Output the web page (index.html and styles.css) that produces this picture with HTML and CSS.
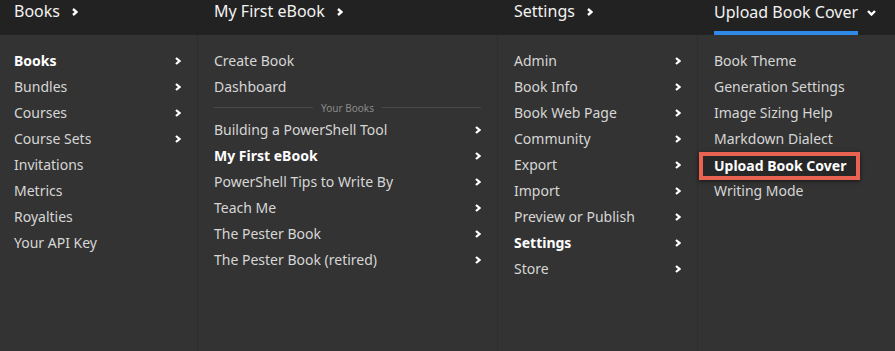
FILE: index.html
```html
<!DOCTYPE html>
<html>
<head>
    <link rel="stylesheet" href="styles.css">
</head>
<body>
    <div class="nav">
        <div class="crumbs">
            <div class="crumb col-1">Books <svg class="chev" viewBox="0 0 6 8"><polyline points="1,1 4.5,4 1,7"/></svg></div>
            <div class="crumb col-2">My First eBook <svg class="chev" viewBox="0 0 6 8"><polyline points="1,1 4.5,4 1,7"/></svg></div>
            <div class="crumb col-3">Settings <svg class="chev" viewBox="0 0 6 8"><polyline points="1,1 4.5,4 1,7"/></svg></div>
            <div class="crumb col-4"><span class="current">Upload Book Cover</span> <svg class="chev down" viewBox="0 0 9 6"><polyline points="1,1 4.5,4.5 8,1"/></svg></div>
        </div>

        <div class="menus">
            <ul class="menu col-1">
                <li class="bold">Books <svg class="arrow" viewBox="0 0 6 8"><polyline points="1,1 4.5,4 1,7"/></svg></li>
                <li>Bundles <svg class="arrow" viewBox="0 0 6 8"><polyline points="1,1 4.5,4 1,7"/></svg></li>
                <li>Courses <svg class="arrow" viewBox="0 0 6 8"><polyline points="1,1 4.5,4 1,7"/></svg></li>
                <li>Course Sets <svg class="arrow" viewBox="0 0 6 8"><polyline points="1,1 4.5,4 1,7"/></svg></li>
                <li>Invitations</li>
                <li>Metrics</li>
                <li>Royalties</li>
                <li>Your API Key</li>
            </ul>
            <ul class="menu col-2">
                <li>Create Book</li>
                <li>Dashboard</li>
                <li class="divider"><span>Your Books</span></li>
                <li>Building a PowerShell Tool <svg class="arrow" viewBox="0 0 6 8"><polyline points="1,1 4.5,4 1,7"/></svg></li>
                <li class="bold">My First eBook <svg class="arrow" viewBox="0 0 6 8"><polyline points="1,1 4.5,4 1,7"/></svg></li>
                <li>PowerShell Tips to Write By <svg class="arrow" viewBox="0 0 6 8"><polyline points="1,1 4.5,4 1,7"/></svg></li>
                <li>Teach Me <svg class="arrow" viewBox="0 0 6 8"><polyline points="1,1 4.5,4 1,7"/></svg></li>
                <li>The Pester Book <svg class="arrow" viewBox="0 0 6 8"><polyline points="1,1 4.5,4 1,7"/></svg></li>
                <li>The Pester Book (retired) <svg class="arrow" viewBox="0 0 6 8"><polyline points="1,1 4.5,4 1,7"/></svg></li>
            </ul>
            <ul class="menu col-3">
                <li>Admin <svg class="arrow" viewBox="0 0 6 8"><polyline points="1,1 4.5,4 1,7"/></svg></li>
                <li>Book Info <svg class="arrow" viewBox="0 0 6 8"><polyline points="1,1 4.5,4 1,7"/></svg></li>
                <li>Book Web Page <svg class="arrow" viewBox="0 0 6 8"><polyline points="1,1 4.5,4 1,7"/></svg></li>
                <li>Community <svg class="arrow" viewBox="0 0 6 8"><polyline points="1,1 4.5,4 1,7"/></svg></li>
                <li>Export <svg class="arrow" viewBox="0 0 6 8"><polyline points="1,1 4.5,4 1,7"/></svg></li>
                <li>Import <svg class="arrow" viewBox="0 0 6 8"><polyline points="1,1 4.5,4 1,7"/></svg></li>
                <li>Preview or Publish <svg class="arrow" viewBox="0 0 6 8"><polyline points="1,1 4.5,4 1,7"/></svg></li>
                <li class="bold">Settings <svg class="arrow" viewBox="0 0 6 8"><polyline points="1,1 4.5,4 1,7"/></svg></li>
                <li>Store <svg class="arrow" viewBox="0 0 6 8"><polyline points="1,1 4.5,4 1,7"/></svg></li>
            </ul>
            <ul class="menu col-4">
                <li>Book Theme</li>
                <li>Generation Settings</li>
                <li>Image Sizing Help</li>
                <li>Markdown Dialect</li>
                <li class="bold"><span class="marked">Upload Book Cover</span></li>
                <li>Writing Mode</li>
            </ul>
        </div>
    </div>
</body>
</html>
```

FILE: styles.css
```css
body {
    margin: 0;
    background-color: #333333;
    font-family: "Noto Sans", "Open Sans", sans-serif;
    color: #d6d6d6;
}
.nav {
    width: 895px;
    height: 351px;
}
.crumbs {
    display: flex;
    height: 35px;
    background-color: #222222;
}
.menus {
    display: flex;
    height: 316px;
}
.col-1 {
    width: 198px;
}
.col-2 {
    width: 300px;
}
.col-3 {
    width: 200px;
}
.col-4 {
    flex: 1;
}
.crumb {
    box-sizing: border-box;
    padding-left: 14px;
    font-size: 16px;
    line-height: 22px;
    color: #f2f2f2;
    display: flex;
    align-items: flex-start;
}
.crumb.col-2,
.crumb.col-3,
.crumb.col-4 {
    padding-left: 16px;
}
.current {
    display: inline-block;
    height: 35px;
    padding-top: 1px;
    box-sizing: border-box;
    border-bottom: 4px solid #2f8ae5;
}
.chev {
    width: 6px;
    height: 8px;
    margin-left: 12px;
    margin-top: 8px;
    fill: none;
    stroke: #ffffff;
    stroke-width: 2.4;
}
.chev.down {
    width: 9px;
    height: 6px;
    margin-left: 9px;
    margin-top: 10px;
}
.menu {
    list-style: none;
    margin: 0;
    padding: 12px 0 0 14px;
    box-sizing: border-box;
    border-right: 1px solid #2d2d2d;
}
.menu.col-2,
.menu.col-3,
.menu.col-4 {
    padding-left: 16px;
}
.menu.col-4 {
    border-right: none;
}
.menu li {
    display: flex;
    align-items: center;
    justify-content: space-between;
    height: 26px;
    padding-right: 16px;
    font-size: 14px;
}
.menu li.bold {
    font-weight: bold;
    color: #ffffff;
}
.arrow {
    width: 6px;
    height: 8px;
    margin-top: 1px;
    fill: none;
    stroke: #ffffff;
    stroke-width: 2.3;
}
.menu li.divider {
    height: 17px;
    font-size: 10px;
    color: #8a8a8a;
    justify-content: center;
    gap: 8px;
    padding-right: 16px;
}
.divider::before,
.divider::after {
    content: "";
    flex: 1;
    height: 1px;
    background-color: #4a4a4a;
}
.marked {
    margin-left: -15px;
    margin-top: 4px;
    padding: 0 10px 0 11px;
    line-height: 20px;
    border: 4px solid #ea6352;
    background-color: #272727;
    box-shadow: 0 1px 4px rgba(0, 0, 0, 0.6);
}
```
